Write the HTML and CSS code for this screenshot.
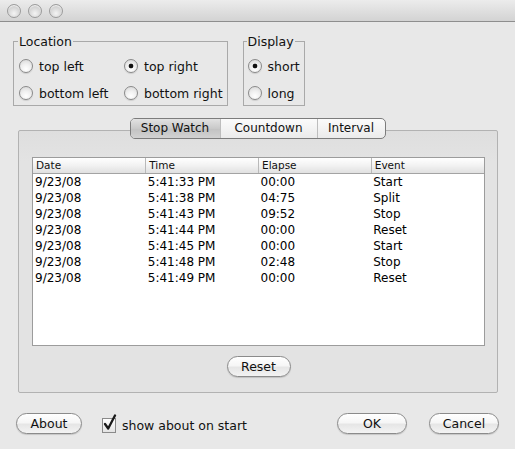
FILE: index.html
```html
<!DOCTYPE html>
<html lang="en">
<head>
    <meta charset="UTF-8">
    <title>Stop Watch Preferences</title>
    <link rel="stylesheet" href="styles.css">
</head>
<body>
    <div class="window">
        <div class="titlebar">
            <span class="light"></span>
            <span class="light"></span>
            <span class="light"></span>
        </div>

        <div class="options">
            <fieldset class="group location">
                <legend>Location</legend>
                <label class="radio"><input type="radio" name="loc"> top left</label>
                <label class="radio"><input type="radio" name="loc" checked> top right</label>
                <label class="radio"><input type="radio" name="loc"> bottom left</label>
                <label class="radio"><input type="radio" name="loc"> bottom right</label>
            </fieldset>
            <fieldset class="group display">
                <legend>Display</legend>
                <label class="radio"><input type="radio" name="disp" checked> short</label>
                <label class="radio"><input type="radio" name="disp"> long</label>
            </fieldset>
        </div>

        <div class="tabbox">
            <div class="tabs">
                <div class="tab tab-stop selected">Stop Watch</div>
                <div class="tab tab-count">Countdown</div>
                <div class="tab tab-interval">Interval</div>
            </div>
            <div class="panel">
                <div class="log">
                    <table>
                        <thead>
                            <tr><th>Date</th><th>Time</th><th>Elapse</th><th>Event</th></tr>
                        </thead>
                        <tbody>
                            <tr><td>9/23/08</td><td>5:41:33 PM</td><td>00:00</td><td>Start</td></tr>
                            <tr><td>9/23/08</td><td>5:41:38 PM</td><td>04:75</td><td>Split</td></tr>
                            <tr><td>9/23/08</td><td>5:41:43 PM</td><td>09:52</td><td>Stop</td></tr>
                            <tr><td>9/23/08</td><td>5:41:44 PM</td><td>00:00</td><td>Reset</td></tr>
                            <tr><td>9/23/08</td><td>5:41:45 PM</td><td>00:00</td><td>Start</td></tr>
                            <tr><td>9/23/08</td><td>5:41:48 PM</td><td>02:48</td><td>Stop</td></tr>
                            <tr><td>9/23/08</td><td>5:41:49 PM</td><td>00:00</td><td>Reset</td></tr>
                        </tbody>
                    </table>
                </div>
                <div class="panel-actions">
                    <button class="pill btn-reset">Reset</button>
                </div>
            </div>
        </div>

        <div class="footer">
            <button class="pill btn-about">About</button>
            <label class="checkbox">
                <span class="box">
                    <svg width="16" height="18" viewBox="0 0 16 18">
                        <path d="M3 10 L6.2 14.5 L13 1.5" fill="none" stroke="#1a1a1a" stroke-width="2.3" stroke-linecap="round" stroke-linejoin="round"/>
                    </svg>
                </span>
                show about on start
            </label>
            <div class="spacer"></div>
            <button class="pill btn-ok">OK</button>
            <button class="pill btn-cancel">Cancel</button>
        </div>
    </div>
</body>
</html>
```

FILE: styles.css
```css
body {
    margin: 0;
    padding: 0;
    background-color: #e8e8e8;
    font-family: 'DejaVu Sans', 'Liberation Sans', sans-serif;
    font-size: 12.5px;
    color: #111;
}
.window {
    width: 515px;
    height: 449px;
    overflow: hidden;
}
.titlebar {
    height: 21px;
    display: flex;
    align-items: center;
    gap: 7px;
    padding-left: 7px;
    background: linear-gradient(#ececec, #d3d3d3);
    border-bottom: 1px solid #8e8e8e;
}
.light {
    width: 12px;
    height: 12px;
    border-radius: 50%;
    border: 1px solid #9b9b9b;
    background: radial-gradient(circle at 50% 70%, #f4f4f4 0, #d6d6d6 55%, #bdbdbd 100%);
    box-shadow: inset 0 1px 1px rgba(255,255,255,0.8);
}

/* option groups */
.options {
    display: flex;
    gap: 15px;
    margin-top: 12px;
    padding-left: 13px;
}
.group {
    margin: 0;
    border: 1px solid #a9a9a9;
    padding: 7px 4px 2px 5px;
    display: grid;
    row-gap: 7px;
}
.group legend {
    padding: 0 1px;
    margin-left: -1px;
    line-height: 15px;
    font-size: 12.5px;
}
.location {
    grid-template-columns: 105px auto;
}
.display {
    padding-left: 4px;
}
.radio {
    display: flex;
    align-items: center;
    gap: 6px;
    height: 20px;
    white-space: nowrap;
}
.radio input {
    appearance: none;
    -webkit-appearance: none;
    margin: 0;
    width: 14px;
    height: 14px;
    border-radius: 50%;
    border: 1px solid #8a8a8a;
    background: radial-gradient(circle at 50% 75%, #ffffff 0, #f0f0f0 45%, #d4d4d4 100%);
    box-shadow: 0 1px 1px rgba(0,0,0,0.12);
}
.radio input:checked {
    background: radial-gradient(circle, #111 0, #111 2px, transparent 2.7px),
                radial-gradient(circle at 50% 75%, #ffffff 0, #f0f0f0 45%, #d4d4d4 100%);
}

/* tabs */
.tabbox {
    margin-top: 12px;
    display: flex;
    flex-direction: column;
    align-items: center;
}
.tabs {
    position: relative;
    z-index: 1;
    display: flex;
    border: 1px solid #7c7c7c;
    border-radius: 5px;
    overflow: hidden;
    font-size: 12px;
    background: linear-gradient(#fbfbfb, #ebebeb);
}
.tab {
    height: 19px;
    line-height: 19px;
    text-align: center;
}
.tab + .tab {
    border-left: 1px solid #bdbdbd;
}
.tab-stop { width: 89px; }
.tab-count { width: 96px; }
.tab-interval { width: 67px; }
.tab.selected {
    background: linear-gradient(#e2e2e2, #c9c9c9 50%, #c2c2c2 51%, #d2d2d2);
}
.panel {
    align-self: stretch;
    margin: -9px 17px 0 18px;
    border: 1px solid #b2b2b2;
    border-radius: 2px;
    background: linear-gradient(#dedede, #e3e3e3 30px);
    padding: 26px 12px 15px 13px;
}

/* log table */
.log {
    height: 189px;
    box-sizing: border-box;
    border: 1px solid #9c9c9c;
    background: #fff;
}
.log table {
    width: 100%;
    table-layout: fixed;
    border-collapse: collapse;
}
.log th {
    height: 15px;
    padding: 0 3px;
    font-size: 10.5px;
    font-weight: normal;
    text-align: left;
    line-height: 15px;
    background: linear-gradient(#ffffff, #f2f2f2 50%, #e0e0e0);
    border-bottom: 1px solid #a3a3a3;
}
.log th + th {
    border-left: 1px solid #b9b9b9;
}
.log td {
    height: 16px;
    padding: 0 2px;
    line-height: 16px;
    font-size: 12px;
    color: #000;
    white-space: nowrap;
}
.panel-actions {
    display: flex;
    justify-content: center;
    margin-top: 10px;
}

/* buttons */
.pill {
    height: 21px;
    padding: 0;
    border: 1px solid #8b8b8b;
    border-radius: 11px;
    font-family: inherit;
    font-size: 12.5px;
    color: #111;
    background: linear-gradient(#ffffff, #f6f6f6 45%, #e6e6e6 55%, #f3f3f3);
    box-shadow: 0 1px 1px rgba(0,0,0,0.15);
}
.btn-reset { width: 64px; }
.btn-about { width: 66px; }
.btn-ok { width: 70px; }
.btn-cancel { width: 70px; margin-left: 22px; }

.footer {
    display: flex;
    align-items: center;
    margin-top: 20px;
    padding: 0 16px;
}
.checkbox {
    display: flex;
    align-items: center;
    gap: 6px;
    margin-left: 20px;
    margin-top: 3px;
}
.box {
    position: relative;
    width: 12px;
    height: 13px;
    border: 1px solid #8a8a8a;
    background: linear-gradient(#ffffff, #e3e3e3);
}
.box svg {
    position: absolute;
    left: -1px;
    top: -5px;
}
.spacer {
    flex: 1;
}
```
